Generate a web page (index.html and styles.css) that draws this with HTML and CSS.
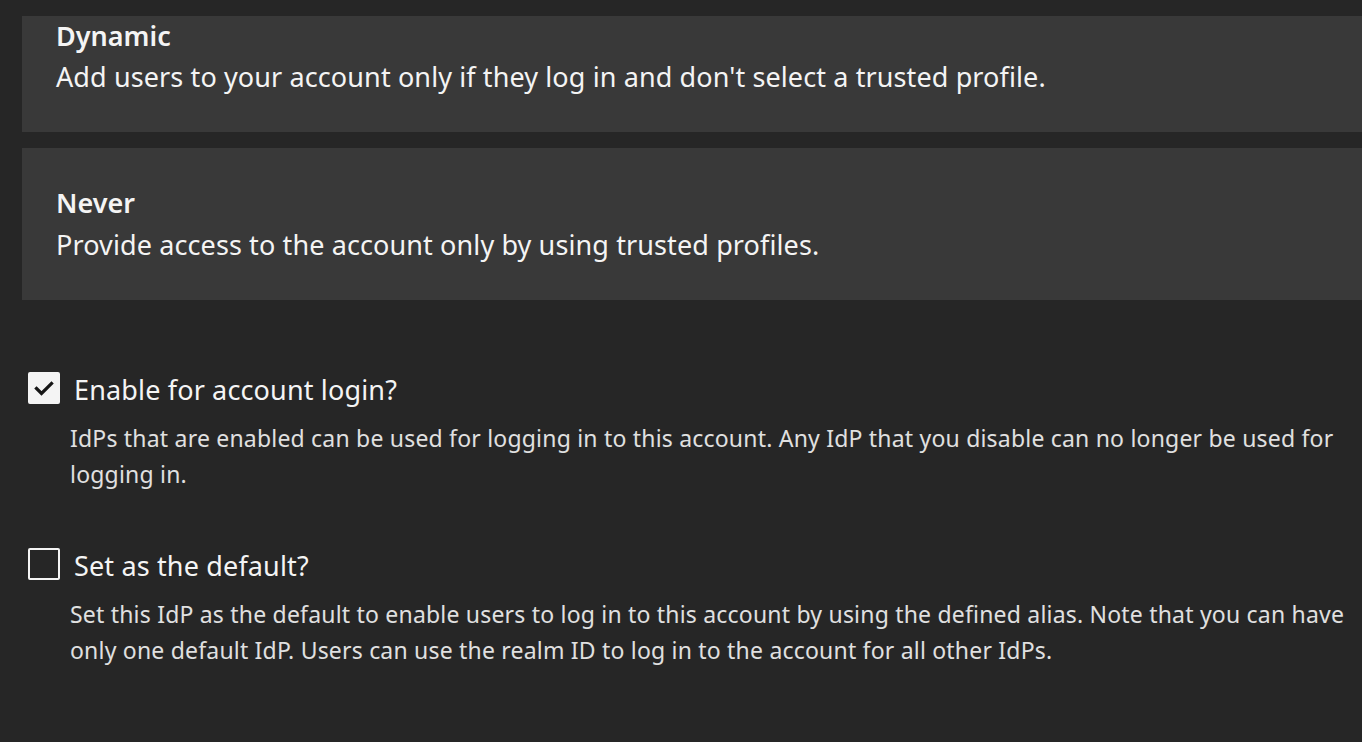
FILE: index.html
```html
<!DOCTYPE html>
<html lang="en">
<head>
<meta charset="utf-8">
<title>IdP settings</title>
<link rel="stylesheet" href="styles.css">
</head>
<body>
<main class="page">
  <div class="tiles">
    <div class="tile tile--first">
      <div class="tile-title">Dynamic</div>
      <div class="tile-text">Add users to your account only if they log in and don't select a trusted profile.</div>
    </div>
    <div class="tile">
      <div class="tile-title">Never</div>
      <div class="tile-text">Provide access to the account only by using trusted profiles.</div>
    </div>
  </div>

  <div class="options">
    <div class="option">
      <div class="option-row">
        <span class="checkbox checkbox--checked">
          <svg viewBox="0 0 32 32" width="32" height="32" aria-hidden="true"><polyline points="8.5,16.5 13.5,21.5 23.5,11.5" fill="none" stroke="#161616" stroke-width="3.2" stroke-linecap="square"/></svg>
        </span>
        <span class="option-label">Enable for account login?</span>
      </div>
      <p class="option-desc">IdPs that are enabled can be used for logging in to this account. Any IdP that you disable can no longer be used for logging in.</p>
    </div>
    <div class="option">
      <div class="option-row">
        <span class="checkbox"></span>
        <span class="option-label">Set as the default?</span>
      </div>
      <p class="option-desc">Set this IdP as the default to enable users to log in to this account by using the defined alias. Note that you can have only one default IdP. Users can use the realm ID to log in to the account for all other IdPs.</p>
    </div>
  </div>
</main>
</body>
</html>
```

FILE: styles.css
```css
html, body {
  margin: 0;
  padding: 0;
  background: #262626;
  overflow: hidden;
}

body {
  font-family: "Noto Sans", "Open Sans", sans-serif;
  color: #f4f4f4;
}

.page {
  width: 1420px;
  padding-top: 16px;
}

.tiles {
  margin-left: 22px;
  display: flex;
  flex-direction: column;
  gap: 16px;
}

.tile {
  background: #393939;
  padding: 34px 34px 34px 34px;
}

.tile--first {
  padding-top: 0;
}

.tile-title {
  font-size: 27px;
  font-weight: 600;
  line-height: 42px;
}

.tile--first .tile-title {
  line-height: 40px;
}

.tile-text {
  font-size: 27px;
  line-height: 42px;
  letter-spacing: 0.11px;
}

.options {
  margin-top: 70px;
  padding-left: 28px;
}

.option + .option {
  margin-top: 54px;
}

.option-row {
  display: flex;
  align-items: flex-start;
  gap: 14px;
}

.checkbox {
  box-sizing: border-box;
  width: 32px;
  height: 32px;
  margin-top: 2px;
  border: 2px solid #f4f4f4;
  border-radius: 2px;
  flex: none;
  position: relative;
}

.checkbox--checked {
  background: #f4f4f4;
}

.checkbox svg {
  position: absolute;
  left: -2px;
  top: -2px;
}

.option-label {
  font-size: 27px;
  line-height: 40px;
  letter-spacing: 0.15px;
}

.option-desc {
  margin: 10px 0 0 42px;
  width: 1300px;
  font-size: 23px;
  line-height: 36px;
  letter-spacing: 0.2px;
  color: #e0e0e0;
}
```
